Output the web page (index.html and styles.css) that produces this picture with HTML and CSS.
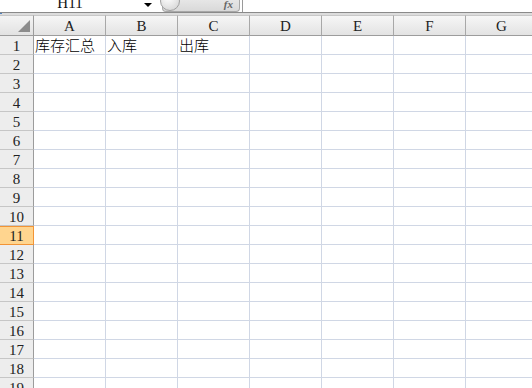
FILE: index.html
```html
<!DOCTYPE html>
<html>
	<head>
		<meta charset="utf-8">
		<title>库存</title>
		<link rel="stylesheet" href="styles.css">
	</head>
	<body>
		<!-- 编辑栏 -->
		<div class="formula-bar">
			<div class="name-box">H11</div>
			<div class="drop"></div>
			<div class="fx-pill">
				<span class="knob"></span>
				<span class="fx">fx</span>
			</div>
			<div class="formula-input"></div>
		</div>
		<div class="bar-gap"><span class="mark"></span></div>
		<!-- 表格区 -->
		<div class="sheet">
			<div class="corner"><span class="tri"></span></div>
			<div class="col-head">A</div>
			<div class="col-head">B</div>
			<div class="col-head">C</div>
			<div class="col-head">D</div>
			<div class="col-head">E</div>
			<div class="col-head">F</div>
			<div class="col-head">G</div>

			<div class="row-head">1</div>
			<div class="cell">库存汇总</div>
			<div class="cell">入库</div>
			<div class="cell">出库</div>
			<div class="cell"></div><div class="cell"></div><div class="cell"></div><div class="cell"></div>
		</div>
		<script type="text/javascript">
			// 生成2到19行的空白格子
			var oSheet = document.querySelector(".sheet")
			for(var r = 2; r <= 19; r++){
				var head = document.createElement("div")
				head.className = r === 11 ? "row-head active" : "row-head"
				head.innerHTML = r
				oSheet.appendChild(head)
				for(var c = 0; c < 7; c++){
					var cell = document.createElement("div")
					cell.className = "cell"
					oSheet.appendChild(cell)
				}
			}
		</script>
	</body>
</html>
```
FILE: styles.css
```css
body {
	margin: 0;
	overflow: hidden;
	background: #fff;
	font-family: "Liberation Serif", "Noto Sans CJK SC", serif;
}

/* 编辑栏 */
.formula-bar {
	display: flex;
	height: 22px;
	margin-top: -10px;
	border-bottom: 1px solid #8a8a8a;
	background: #fff;
}
.formula-bar .name-box {
	width: 140px;
	text-align: center;
	font-size: 15px;
	line-height: 22px;
	padding-top: 2px;
	box-sizing: border-box;
	color: #111;
}
.formula-bar .drop {
	width: 0;
	height: 0;
	margin: 13px 6px 0 4px;
	border-left: 4px solid transparent;
	border-right: 4px solid transparent;
	border-top: 4px solid #000;
}
.formula-bar .fx-pill {
	position: relative;
	width: 76px;
	margin-left: 4px;
	border: 1px solid #a8a8a8;
	border-top: none;
	border-radius: 0 0 4px 4px;
	background: linear-gradient(#f2f2f2, #d9d9d9);
}
.fx-pill .knob {
	position: absolute;
	left: -3px;
	bottom: 0px;
	width: 18px;
	height: 18px;
	border-radius: 50%;
	border: 1px solid #a0a0a0;
	background: radial-gradient(circle at 40% 30%, #fff, #cfcfcf);
}
.fx-pill .fx {
	position: absolute;
	right: 6px;
	bottom: 1px;
	font-family: "Liberation Serif", serif;
	font-style: italic;
	font-weight: bold;
	font-size: 11px;
	color: #666;
}
.formula-input {
	flex: 1;
	border-left: 1px solid #9a9a9a;
	margin-left: 2px;
}
.bar-gap {
	height: 2px;
	background: #dcdcdc;
}
.bar-gap .mark {
	display: block;
	width: 2px;
	height: 1px;
	background: #4f81bd;
}

/* 表格 */
.sheet {
	display: grid;
	grid-template-columns: 34px repeat(7, 72px);
	grid-template-rows: 21px repeat(19, 19px);
	font-size: 15px;
}
.sheet .corner {
	position: relative;
	background: linear-gradient(#f4f4f4, #e2e2e2);
	border-top: 1px solid #c8c8c8;
	border-right: 1px solid #9c9c9c;
	border-bottom: 1px solid #9c9c9c;
}
.corner .tri {
	position: absolute;
	right: 3px;
	bottom: 3px;
	width: 0;
	height: 0;
	border-left: 12px solid transparent;
	border-bottom: 12px solid #8c8c8c;
}
.sheet .col-head {
	background: linear-gradient(#f6f6f6, #e3e3e3);
	border-top: 1px solid #c8c8c8;
	border-right: 1px solid #a8a8a8;
	border-bottom: 1px solid #9c9c9c;
	text-align: center;
	line-height: 20px;
	color: #222;
}
.sheet .row-head {
	background: #ededed;
	border-right: 1px solid #9c9c9c;
	border-bottom: 1px solid #c6c6c6;
	text-align: center;
	line-height: 18px;
	padding-top: 1px;
	color: #222;
}
.sheet .row-head.active {
	background: #ffd58f;
	border-right-color: #f29436;
	border-bottom-color: #f29436;
	box-shadow: inset 0 1px 0 #f29436;
}
.sheet .cell {
	border-right: 1px solid #d0d7e5;
	border-bottom: 1px solid #d0d7e5;
	line-height: 18px;
	padding-top: 1px;
	padding-left: 1px;
	white-space: nowrap;
	overflow: visible;
	font-weight: 300;
	color: #000;
}
```
